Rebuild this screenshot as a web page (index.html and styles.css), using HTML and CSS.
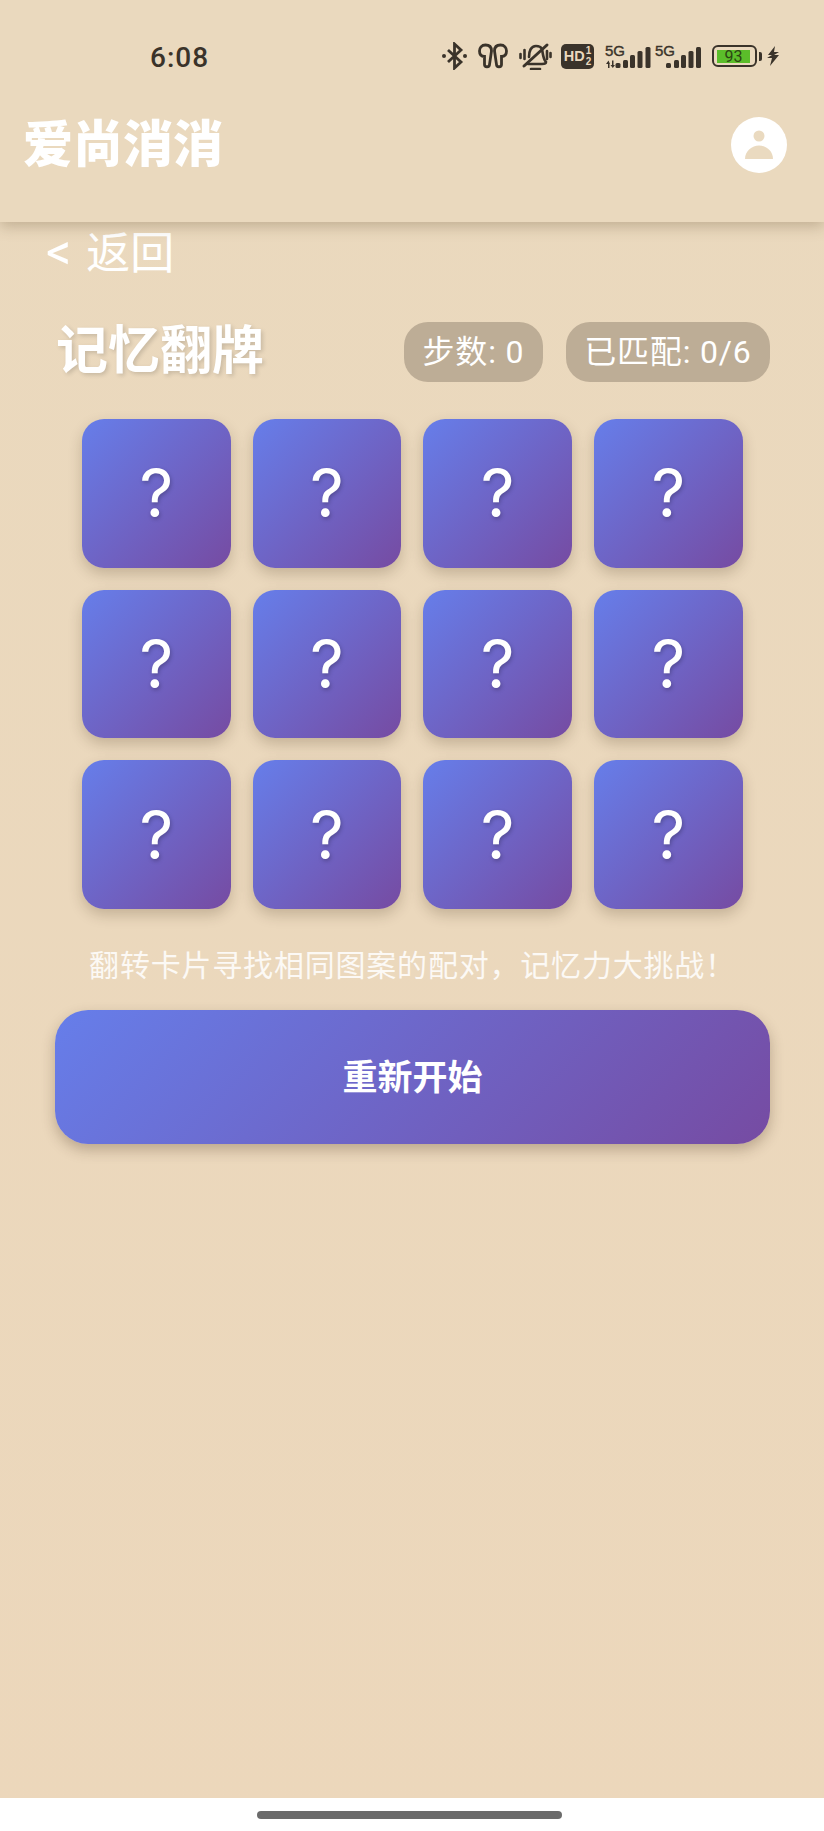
FILE: index.html
```html
<!DOCTYPE html>
<html lang="zh-CN">
<head>
  <meta charset="UTF-8" />
  <meta name="viewport" content="width=device-width, initial-scale=1.0"/>
  <title>记忆翻牌</title>
  <link rel="stylesheet" href="styles.css">
</head>
<body>
  <div class="app">
    <header class="top">
      <div class="status">
        <span class="time">6:08</span>
        <div class="status-icons">
          <!-- bluetooth -->
          <svg class="ic" width="25" height="28" viewBox="0 0 25 28" fill="none" stroke="#3a332a" stroke-width="2.8">
            <path d="M6 8 L19 20 L12.500 26 V2 L19 8 L6 20"/>
            <circle cx="2" cy="14" r="2" fill="#3a332a" stroke="none"/>
            <circle cx="23" cy="14" r="2" fill="#3a332a" stroke="none"/>
          </svg>
          <!-- earbuds -->
          <svg class="ic" width="30" height="26" viewBox="0 0 30 26" fill="none" stroke="#3a332a" stroke-width="2.8" stroke-linecap="round">
            <path d="M7.500 2 C3.500 2 1.500 5 1.500 8 C1.500 11.500 3.500 13.500 6.500 13.500 V21.500 C6.500 24.500 11.500 24.500 11.500 21.500 L13.500 8 C13.500 4.500 11.500 2 7.500 2 Z"/>
            <path d="M22.500 2 C26.500 2 28.500 5 28.500 8 C28.500 11.500 26.500 13.500 23.500 13.500 V21.500 C23.500 24.500 18.500 24.500 18.500 21.500 L16.500 8 C16.500 4.500 18.500 2 22.500 2 Z"/>
          </svg>
          <!-- muted bell -->
          <svg class="ic bell" width="33" height="28" viewBox="0 0 33 28" fill="none" stroke="#3a332a" stroke-width="2.6" stroke-linecap="round">
            <path d="M10 15 C10 9 12 4 17 4 C20 4 22 5 23 7 C24 12 24 17 27 20 C27 22 25 22 23 22 L9 22"/>
            <path d="M12 27 H21"/>
            <path d="M5 24 L28 3" stroke-width="3"/>
            <path d="M1.500 12 V16 M5.500 8 V17 M28 9 V17 M31.500 11 V15"/>
          </svg>
          <div class="hd">HD<span class="hd-sub">1<br>2</span></div>
          <div class="net">
            <span class="net-label">5G</span>
            <svg width="46" height="26" viewBox="0 0 46 26" fill="#3a332a">
              <path d="M3 24 V20 H1 L3.500 16.500 L5 20 H4.500 V24 Z M7 16.500 V21 H5.500 L7.800 24 L10 21 H8.500 V16.500 Z"/>
              <rect x="10.500" y="19" width="5" height="5" rx="1.500"/>
              <rect x="18" y="16" width="5" height="8" rx="1.500"/>
              <rect x="25" y="11" width="5" height="13" rx="1.500"/>
              <rect x="32.500" y="7" width="5" height="17" rx="1.500"/>
              <rect x="40.500" y="3" width="5" height="21" rx="1.500"/>
            </svg>
          </div>
          <div class="net">
            <span class="net-label">5G</span>
            <svg width="46" height="26" viewBox="0 0 46 26" fill="#3a332a">
              <rect x="11" y="19" width="5" height="5" rx="1.500"/>
              <rect x="19" y="16" width="5" height="8" rx="1.500"/>
              <rect x="26" y="11" width="5" height="13" rx="1.500"/>
              <rect x="33.500" y="7" width="5" height="17" rx="1.500"/>
              <rect x="41" y="3" width="5" height="21" rx="1.500"/>
            </svg>
          </div>
          <div class="battery">
            <div class="battery-body"><span class="battery-fill">93</span></div>
            <span class="battery-tip"></span>
          </div>
          <svg class="ic bolt" width="12" height="20" viewBox="0 0 12 20" fill="#3a332a">
            <path d="M8 0 L1 9 H5 L0 12 H5 L3 20 L12 9 H7 L12 6 H7 Z"/>
          </svg>
        </div>
      </div>
      <div class="brand">
        <h1>爱尚消消</h1>
        <div class="avatar">
          <svg width="28" height="30" viewBox="0 0 28 30" fill="#eadac0">
            <circle cx="14" cy="6" r="5.500"/>
            <path d="M0 29 C0 21 7 15.500 14 15.500 C21 15.500 28 21 28 29 Z"/>
          </svg>
        </div>
      </div>
    </header>

    <main class="content">
      <a class="back"><span class="chev">&lt;</span> 返回</a>
      <div class="game-head">
        <h2>记忆翻牌</h2>
        <div class="stats">
          <span class="pill">步数: 0</span>
          <span class="pill">已匹配: 0/6</span>
        </div>
      </div>
      <div class="board">
        <div class="card">?</div>
        <div class="card">?</div>
        <div class="card">?</div>
        <div class="card">?</div>
        <div class="card">?</div>
        <div class="card">?</div>
        <div class="card">?</div>
        <div class="card">?</div>
        <div class="card">?</div>
        <div class="card">?</div>
        <div class="card">?</div>
        <div class="card">?</div>
      </div>
      <p class="hint">翻转卡片寻找相同图案的配对，记忆力大挑战！</p>
      <button class="restart">重新开始</button>
    </main>

    <div class="navbar"><span class="home-bar"></span></div>
  </div>
</body>
</html>
```

FILE: styles.css
```css
* {
  box-sizing: border-box;
}

body {
  margin: 0;
  font-family: Roboto, "Noto Sans CJK SC", sans-serif;
  background: #ead9be;
  color: #fff;
}

.app {
  width: 824px;
  height: 1831px;
  display: flex;
  flex-direction: column;
  overflow: hidden;
  background: linear-gradient(180deg, #ead9be, #ecd7bb);
}

.top {
  height: 222px;
  flex: none;
  background: #ead9be;
  box-shadow: 0 4px 14px rgba(90, 70, 40, 0.3);
  position: relative;
  z-index: 1;
}

.status {
  height: 84px;
  padding: 37px 45px 0 150px;
  display: flex;
  align-items: flex-start;
  justify-content: space-between;
  color: #3a332a;
}

.time {
  font-size: 28px;
  line-height: 38px;
  font-weight: 500;
  letter-spacing: 1px;
  margin-top: 2px;
}

.status-icons {
  display: flex;
  align-items: center;
  gap: 11px;
  height: 38px;
}

.ic {
  flex: none;
}

.bell {
  margin-right: -2px;
}

.bolt {
  margin-left: -6px;
}

.hd {
  width: 33px;
  height: 25px;
  background: #3a332a;
  border-radius: 5px;
  color: #ead9be;
  font: bold 14.5px/25px "Liberation Sans", sans-serif;
  display: flex;
  justify-content: center;
  gap: 1px;
}

.hd-sub {
  font-size: 10px;
  line-height: 11px;
  padding-top: 1px;
}

.net {
  position: relative;
  display: flex;
  margin-top: 2px;
}

.net + .net {
  margin-left: -7px;
}

.net-label {
  position: absolute;
  left: 0;
  top: 0;
  color: #3a332a;
  font: 15px/14px "Liberation Sans", sans-serif;
  -webkit-text-stroke: 0.4px #3a332a;
}

.battery {
  display: flex;
  align-items: center;
  gap: 2px;
}

.battery-body {
  width: 45px;
  height: 22px;
  border: 2px solid #3a332a;
  border-radius: 6px;
  padding: 3px 5px 2px 3px;
}

.battery-fill {
  display: block;
  height: 13px;
  background: #5bbd2a;
  color: #2c4414;
  font: 16px/13px Roboto, sans-serif;
  text-align: center;
}

.battery-tip {
  width: 3px;
  height: 9px;
  background: #3a332a;
  border-radius: 0 2px 2px 0;
}

.brand {
  padding: 0 37px 0 23px;
  height: 60px;
  margin-top: 31px;
  display: flex;
  align-items: center;
  justify-content: space-between;
}

.brand h1 {
  margin: 0;
  font-size: 50px;
  font-weight: 900;
  line-height: 60px;
}

.avatar {
  width: 56px;
  height: 56px;
  border-radius: 50%;
  background: #fff;
  display: flex;
  align-items: center;
  justify-content: center;
}

.content {
  flex: 1;
  padding: 0 54px 0 55px;
}

.back {
  display: block;
  margin-left: -9px;
  height: 62px;
  font-size: 44px;
  line-height: 60px;
  word-spacing: 4px;
}

.chev {
  font-size: 50px;
}

.game-head {
  display: flex;
  align-items: center;
  justify-content: space-between;
  margin-top: 38px;
  height: 60px;
}

.game-head h2 {
  margin: 0 0 0 1px;
  font-size: 52px;
  line-height: 60px;
  font-weight: 700;
  text-shadow: 2px 2px 4px rgba(0, 0, 0, 0.15);
}

.stats {
  display: flex;
  gap: 23px;
}

.pill {
  height: 60px;
  padding: 0 18.5px;
  border-radius: 24px;
  background: #bdad96;
  font-size: 32px;
  line-height: 60px;
  letter-spacing: 0.8px;
}

.board {
  margin: 37px 0 0 27px;
  display: grid;
  grid-template-columns: repeat(4, 148.5px);
  grid-auto-rows: 148.5px;
  gap: 22.2px;
}

.card {
  border-radius: 22px;
  background: linear-gradient(135deg, #667eea, #764ba2);
  box-shadow: 0 6px 14px rgba(60, 40, 20, 0.22);
  display: flex;
  align-items: center;
  justify-content: center;
  font: 66px/1 Inter, sans-serif;
  text-shadow: 1px 2px 4px rgba(0, 0, 0, 0.25);
}

.hint {
  margin: 35px 0 0;
  font-size: 30px;
  line-height: 44px;
  letter-spacing: 0.8px;
  text-align: center;
  opacity: 0.85;
}

.restart {
  display: block;
  width: 100%;
  height: 134px;
  margin-top: 22px;
  padding: 0 0 4px;
  border: none;
  border-radius: 33px;
  background: linear-gradient(135deg, #667eea, #764ba2);
  box-shadow: 0 6px 14px rgba(60, 40, 20, 0.28);
  color: #fff;
  font-family: inherit;
  font-size: 35px;
  font-weight: 700;
}

.navbar {
  height: 33px;
  flex: none;
  background: #fff;
  display: flex;
  justify-content: center;
  padding: 13px 5px 0 0;
}

.home-bar {
  width: 305px;
  height: 8px;
  border-radius: 4px;
  background: #6b6b6b;
}
```
